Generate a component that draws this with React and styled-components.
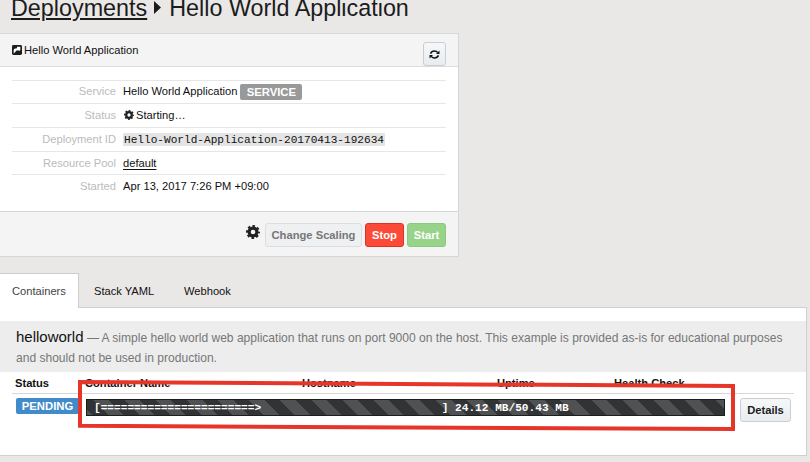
import React from "react";
import styled, { createGlobalStyle, css } from "styled-components";

const GlobalStyle = createGlobalStyle`
  * { box-sizing: border-box; }
  html, body { margin: 0; background: #e9e8e7; }
  body {
    width: 810px; height: 462px; overflow: hidden;
    font: 11.15px/14px "Liberation Sans", Arial, sans-serif;
    color: #111;
  }
`;

const Page = styled.main`
  position: relative;
  width: 810px;
  height: 462px;
  overflow: hidden;
`;

const Title = styled.h1`
  display: flex;
  height: 33px;
  margin: 0;
  padding-left: 11px;
  font-size: 23.35px;
  line-height: 16px;
  font-weight: 400;
  white-space: nowrap;
  color: #1c1c1c;
  a { text-decoration: underline; text-decoration-thickness: 1.5px; text-underline-offset: 2px; }
  svg { width: 7px; height: 13px; margin: 1px 8px 0 7px; flex: none; }
`;

const Card = styled.section`
  width: 459px;
  height: 224px;
  border: 1px solid #d5d6d8;
  border-left: 0;
  background: #fff;
`;

const CardHeader = styled.header`
  display: flex;
  height: 33px;
  padding: 8px 12px 0 12px;
  background: #f4f4f4;
  border-bottom: 1px solid #dcdddf;
  justify-content: space-between;
`;

const CardTitle = styled.div`
  display: flex;
  height: 15px;
  align-items: center;
  gap: 2px;
  svg { width: 10px; height: 10px; }
`;

const Button = styled.button`
  display: flex;
  align-items: center;
  justify-content: center;
  flex: none;
  width: ${(p) => p.$w}px;
  height: 24px;
  padding: 0;
  border: 1px solid #c9ced4;
  border-radius: 3px;
  background: linear-gradient(#f6f7f9, #e9ecef);
  font: bold 11.2px/14px "Liberation Sans", Arial, sans-serif;
  color: #1c1c1c;
  ${(p) => p.$tone === "muted" && css`color: #777; border-color: #dadde2; background: #eff0f2;`}
  ${(p) => p.$tone === "stop" && css`color: #fff; border-color: #d93527; background: #fb4b38;`}
  ${(p) => p.$tone === "start" && css`color: #fff; border-color: #8aca7e; background: #98d38a;`}
`;

const Details = styled.dl`
  height: 144px;
  margin: 0;
  padding: 13px 12px 0;
`;

const DetailRow = styled.div`
  display: flex;
  align-items: flex-start;
  height: ${(p) => p.$h}px;
  padding-top: 4px;
  border-top: 1px solid #e6e6e6;
  line-height: 15px;
  &:first-child { padding-top: 3px; }
  dt { width: 104px; margin-right: 7px; text-align: right; color: #bbb; }
  dd { display: flex; align-items: center; margin: 0; height: 15px; }
  svg { width: 10px; height: 10px; margin: -1px 2px 0 1px; }
`;

const Badge = styled.span`
  display: inline-flex;
  align-items: center;
  justify-content: center;
  width: ${(p) => p.$w}px;
  height: 16px;
  border-radius: 2px;
  background: ${(p) => p.$bg};
  color: #fff;
  font-weight: bold;
  font-size: 11.3px;
  line-height: 16px;
`;

const ServiceBadge = styled(Badge)`
  margin-left: 3px;
`;

const Code = styled.code`
  display: block;
  height: 13px;
  padding: 0 1px;
  background: #e4e4e4;
  font: 11.12px/15px "Liberation Mono", monospace;
`;

const PoolLink = styled.a`
  text-decoration: underline;
  text-underline-offset: 2px;
`;

const CardFooter = styled.footer`
  display: flex;
  height: 45px;
  padding: 11px 12px 0 0;
  gap: 3px;
  justify-content: flex-end;
  border-top: 1px solid #d5d6d8;
  background: #f4f4f4;
  > svg { width: 14px; height: 14px; margin: 2px 2px 0 0; }
`;

const Tabs = styled.nav`
  display: flex;
  height: 34px;
  margin-top: 16px;
`;

const Tab = styled.div`
  height: 34px;
  width: ${(p) => p.$w}px;
  padding: 11px 0 0 ${(p) => p.$pad}px;
  ${(p) => p.$active && css`
    height: 35px;
    position: relative;
    z-index: 1;
    background: #fff;
    border: solid #cdcdcd;
    border-width: 1px 1px 0 0;
    padding-top: 10px;
    color: #444;
  `}
`;

const Panel = styled.section`
  width: 807px;
  height: 149px;
  padding-top: 13px;
  border: 1px solid #cfcfcf;
  border-left: 0;
  background: #fff;
`;

const Description = styled.div`
  height: 51px;
  padding: 6px 0 0 16px;
  background: #ededed;
  color: #777;
  font-size: 12.05px;
  line-height: 21px;
  white-space: nowrap;
  div { height: 21px; }
  strong { font-weight: 400; font-size: 15px; line-height: 20px; color: #111; }
`;

const TableHead = styled.div`
  display: grid;
  grid-template-columns: 70px 217px 195px 117px 1fr;
  height: 22px;
  margin: 0 12px;
  padding: 4px 0 0 3px;
  border-bottom: 1px solid #d8d8d8;
  font-weight: bold;
`;

const TableRow = styled.div`
  display: flex;
  align-items: flex-start;
  padding: 4px 0 0 16px;
`;

const Progress = styled.pre`
  width: 639px;
  height: 17px;
  margin: 1px 15px 0 7px;
  padding: 0 0 0 7px;
  border: 1px solid #1c1d1e;
  background: repeating-linear-gradient(45deg, #505153 0 4px, #323335 4px 15px, #505153 15px 22px);
  color: #fff;
  font: bold 11.15px/16px "Liberation Mono", monospace;
`;

const Highlight = styled.svg`
  position: absolute;
  left: 76px;
  top: 377px;
  width: 664px;
  height: 58px;
  fill: none;
  stroke: #e63629;
  stroke-width: 4;
`;

const CaretIcon = () => (
  <svg viewBox="0 0 7 13"><path d="M0 0 7 6.500 0 13Z" fill="#1c1c1c" /></svg>
);

const CogIcon = () => (
  <svg viewBox="0 0 14 14" fill="none" stroke="#222">
    <circle cx="7" cy="7" r="3.900" strokeWidth="3.200" />
    <circle cx="7" cy="7" r="6" strokeWidth="2" strokeDasharray="2.500 2.212" strokeDashoffset="1.250" />
  </svg>
);

const ShareIcon = () => (
  <svg viewBox="0 0 9 9">
    <rect width="9" height="9" rx="1.3" fill="#1c1c1c" />
    <path d="M1.500 7.600V5Q1.500 3 4.500 3V1.500H7.500V4.500L6.500 5.500 5.500 4.700Q3 4.800 3 6.200Z" fill="#fff" />
  </svg>
);

const RefreshIcon = () => (
  <svg width="11" height="9" viewBox="0 0 11 9" fill="none" stroke="#111" strokeWidth="1.5">
    <path d="M1.500 3.600Q2.600 1 5.500 1 7.500 1 8.800 2.600M9.500 5.400Q8.400 8 5.500 8 3.500 8 2.200 6.400" />
    <path d="M10.500 .5V4H7ZM.5 8.500V5H4Z" fill="#111" stroke="none" />
  </svg>
);

export default function App() {
  return (
    <>
      <GlobalStyle />
      <Page>
        <Title>
          <a>Deployments</a>
          <CaretIcon />
          <span>Hello World Application</span>
        </Title>
        <Card>
          <CardHeader>
            <CardTitle><ShareIcon />Hello World Application</CardTitle>
            <Button $w={23}><RefreshIcon /></Button>
          </CardHeader>
          <Details>
            <DetailRow $h={23}><dt>Service</dt><dd>Hello World Application <ServiceBadge $w={62} $bg="#999">SERVICE</ServiceBadge></dd></DetailRow>
            <DetailRow $h={24}><dt>Status</dt><dd><CogIcon />Starting…</dd></DetailRow>
            <DetailRow $h={24}><dt>Deployment ID</dt><dd><Code>Hello-World-Application-20170413-192634</Code></dd></DetailRow>
            <DetailRow $h={23}><dt>Resource Pool</dt><dd><PoolLink>default</PoolLink></dd></DetailRow>
            <DetailRow $h={24}><dt>Started</dt><dd>Apr 13, 2017 7:26 PM +09:00</dd></DetailRow>
          </Details>
          <CardFooter>
            <CogIcon />
            <Button $w={97} $tone="muted">Change Scaling</Button>
            <Button $w={39} $tone="stop">Stop</Button>
            <Button $w={39} $tone="start">Start</Button>
          </CardFooter>
        </Card>
        <Tabs>
          <Tab $active $w={79} $pad={12}>Containers</Tab>
          <Tab $w={89} $pad={15}>Stack YAML</Tab>
          <Tab $w={90} $pad={16}>Webhook</Tab>
        </Tabs>
        <Panel>
          <Description>
            <div><strong>helloworld</strong> — A simple hello world web application that runs on port 9000 on the host. This example is provided as-is for educational purposes</div>
            <div>and should not be used in production.</div>
          </Description>
          <TableHead>
            <span>Status</span><span>Container Name</span><span>Hostname</span><span>Uptime</span><span>Health Check</span>
          </TableHead>
          <TableRow>
            <Badge $w={63} $bg="#428bca">PENDING</Badge>
            <Progress>{"[" + "=".repeat(23) + ">" + " ".repeat(27) + "] 24.12 MB/50.43 MB"}</Progress>
            <Button $w={51}>Details</Button>
          </TableRow>
        </Panel>
        <Highlight viewBox="76 377 664 58"><path d="M80 382L733 386V429L80 425.800Z" /></Highlight>
      </Page>
    </>
  );
}
